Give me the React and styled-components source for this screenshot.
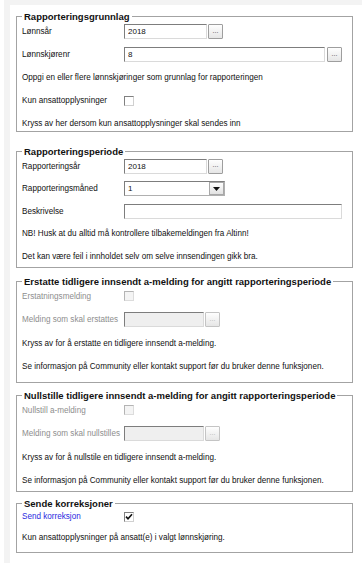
import React from "react";
import styled, { createGlobalStyle } from "styled-components";

const GlobalStyle = createGlobalStyle`
  body {
    margin: 0;
    background: #fff;
    font-family: "Liberation Sans", Arial, sans-serif;
  }
`;

const Page = styled.div`
  margin-left: 4px;
  height: 563px;
  box-sizing: border-box;
  padding: 5px 0 0 6px;
  background: #f3f3f3;
`;

const Sheet = styled.div`
  height: 100%;
  box-sizing: border-box;
  padding: 5px 0 0 6px;
  background: #fff;
`;

const Group = styled.fieldset`
  width: 337px;
  box-sizing: border-box;
  min-width: 0;
  margin: 0 0 ${props => props.$gap}px;
  padding: 0 5px;
  border: 1px solid #a3a3a3;
`;

const Legend = styled.legend`
  padding: 0 2px;
  font-size: 9.5px;
  line-height: 13px;
  font-weight: bold;
  color: #111;
`;

const Rows = styled.div`
  margin: -3px 0 ${props => props.$bottom}px;
`;

const Row = styled.div`
  display: flex;
  align-items: center;
  height: ${props => props.$h || 23}px;
  font-size: 8.15px;
  color: #111;
  white-space: nowrap;
`;

const Label = styled.span`
  min-width: 100px;
  padding-right: 2px;
  color: ${props =>
    props.$tone === "muted" ? "#8e8e8e" : props.$tone === "link" ? "#2a2ae0" : "#111"};
`;

const TextInput = styled.input`
  width: ${props => props.$w}px;
  height: 15px;
  box-sizing: border-box;
  margin: 0;
  padding: 0 3px;
  border: 1px solid;
  border-color: #7d7d7d #dadada #dadada #7d7d7d;
  background: ${props => (props.disabled ? "#efefef" : "#fff")};
  font: 8px "Liberation Sans", Arial, sans-serif;
  color: #111;
  outline: none;
`;

const DotsButton = styled.button`
  width: 15px;
  height: 15px;
  margin: 0 0 0 ${props => props.$gap || 1}px;
  padding: 0 0 3px;
  border: 1px solid ${props => (props.disabled ? "#c4c4c4" : "#9e9e9e")};
  border-radius: 1px;
  background: linear-gradient(#fefefe, #e6e6e6);
  font: 7px "Liberation Sans", Arial, sans-serif;
  color: ${props => (props.disabled ? "#b0b0b0" : "#444")};
`;

const Select = styled.div`
  display: flex;
  width: 101px;
  height: 15px;
  box-sizing: border-box;
  border: 1px solid;
  border-color: #7d7d7d #b0b0b0 #b0b0b0 #7d7d7d;
  background: #fff;
`;

const SelectValue = styled.span`
  flex: 1;
  padding-left: 3px;
  font-size: 8px;
  line-height: 13px;
`;

const SelectArrow = styled.span`
  display: flex;
  align-items: center;
  justify-content: center;
  width: 13px;
  border: 1px solid #a8a8a8;
  background: linear-gradient(#fefefe, #e2e2e2);
`;

const Check = styled.span`
  display: flex;
  align-items: center;
  justify-content: center;
  width: 10px;
  height: 10px;
  box-sizing: border-box;
  border: 1px solid;
  border-color: ${props =>
    props.$off ? "#b4b4b4 #dcdcdc #dcdcdc #b4b4b4" : "#808080 #d0d0d0 #d0d0d0 #808080"};
  background: ${props => (props.$off ? "#f4f4f4" : "#fff")};
`;

const Note = styled(Row)`
  color: #111;
`;

const Tick = () => (
  <svg width="8" height="8" viewBox="0 0 8 8">
    <path d="M1 3.6 L3 5.8 L7 1.2" fill="none" stroke="#111" strokeWidth="1.6" />
  </svg>
);

const Triangle = () => (
  <svg width="7" height="4" viewBox="0 0 7 4">
    <path d="M0 0 H7 L3.5 4 Z" fill="#111" />
  </svg>
);

const Picker = ({ value, width, wide, disabled }) => (
  <>
    <TextInput $w={width} defaultValue={value} disabled={disabled} />
    <DotsButton $gap={wide ? 2 : 1} disabled={disabled}>...</DotsButton>
  </>
);

export default function App() {
  return (
    <>
      <GlobalStyle />
      <Page>
        <Sheet>
          <Group $gap={13}>
            <Legend>Rapporteringsgrunnlag</Legend>
            <Rows $bottom={-4}>
              <Row>
                <Label>Lønnsår</Label>
                <Picker value="2018" width={83} />
              </Row>
              <Row>
                <Label>Lønnskjørenr</Label>
                <Picker value="8" width={201} wide />
              </Row>
              <Note>Oppgi en eller flere lønnskjøringer som grunnlag for rapporteringen</Note>
              <Row>
                <Label>Kun ansattopplysninger</Label>
                <Check />
              </Row>
              <Note>Kryss av her dersom kun ansattopplysninger skal sendes inn</Note>
            </Rows>
          </Group>

          <Group $gap={7}>
            <Legend>Rapporteringsperiode</Legend>
            <Rows $bottom={-1}>
              <Row $h={22.5}>
                <Label>Rapporteringsår</Label>
                <Picker value="2018" width={83} />
              </Row>
              <Row $h={22.5}>
                <Label>Rapporteringsmåned</Label>
                <Select>
                  <SelectValue>1</SelectValue>
                  <SelectArrow>
                    <Triangle />
                  </SelectArrow>
                </Select>
              </Row>
              <Row $h={22.5}>
                <Label>Beskrivelse</Label>
                <TextInput $w={218} />
              </Row>
              <Note $h={22.5}>NB! Husk at du alltid må kontrollere tilbakemeldingen fra Altinn!</Note>
              <Note $h={22.5}>Det kan være feil i innholdet selv om selve innsendingen gikk bra.</Note>
            </Rows>
          </Group>

          <Group $gap={6}>
            <Legend>Erstatte tidligere innsendt a-melding for angitt rapporteringsperiode</Legend>
            <Rows $bottom={3}>
              <Row $h={23.5}>
                <Label $tone="muted">Erstatningsmelding</Label>
                <Check $off />
              </Row>
              <Row $h={23.5}>
                <Label $tone="muted">Melding som skal erstattes</Label>
                <Picker width={80} disabled />
              </Row>
              <Note $h={23.5}>Kryss av for å erstatte en tidligere innsendt a-melding.</Note>
              <Note $h={23.5}>Se informasjon på Community eller kontakt support før du bruker denne funksjonen.</Note>
            </Rows>
          </Group>

          <Group $gap={5}>
            <Legend>Nullstille tidligere innsendt a-melding for angitt rapporteringsperiode</Legend>
            <Rows $bottom={-2}>
              <Row $h={23.5}>
                <Label $tone="muted">Nullstill a-melding</Label>
                <Check $off />
              </Row>
              <Row $h={23.5}>
                <Label $tone="muted">Melding som skal nullstilles</Label>
                <Picker width={80} disabled />
              </Row>
              <Note $h={23.5}>Kryss av for å nullstile en tidligere innsendt a-melding.</Note>
              <Note $h={23.5}>Se informasjon på Community eller kontakt support før du bruker denne funksjonen.</Note>
            </Rows>
          </Group>

          <Group $gap={0}>
            <Legend>Sende korreksjoner</Legend>
            <Rows $bottom={3}>
              <Row $h={20}>
                <Label $tone="link">Send korreksjon</Label>
                <Check>
                  <Tick />
                </Check>
              </Row>
              <Note $h={22}>Kun ansattopplysninger på ansatt(e) i valgt lønnskjøring.</Note>
            </Rows>
          </Group>
        </Sheet>
      </Page>
    </>
  );
}
